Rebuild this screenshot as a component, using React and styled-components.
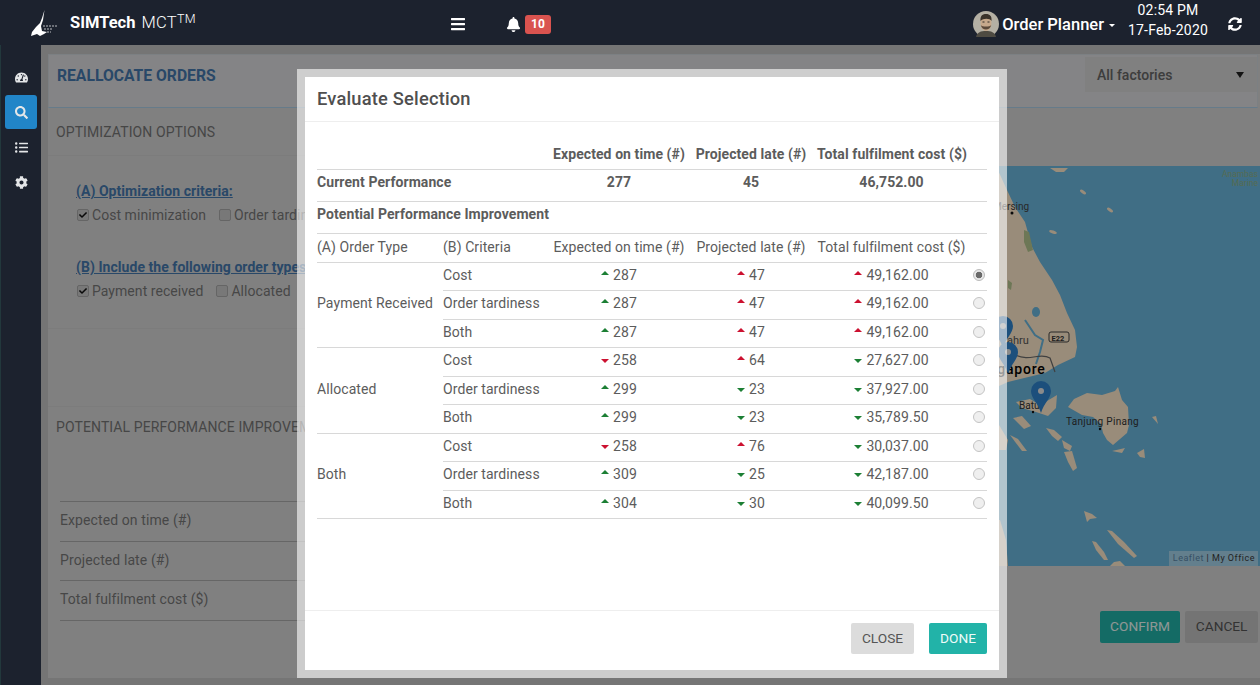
import React from 'react'
import styled, { createGlobalStyle } from 'styled-components'
import { FaTachometerAlt, FaSearch, FaListUl, FaCog, FaBars, FaBell, FaSyncAlt, FaCheck } from 'react-icons/fa'

const GlobalStyle = createGlobalStyle`
  html, body {
    margin: 0;
    padding: 0;
    height: 100%;
    overflow: hidden;
    font-family: Roboto, "Liberation Sans", sans-serif;
  }
  * {
    box-sizing: border-box;
  }
`
const colors = {
  navy: '#1c222e',
  blue: '#4578ad',
  pin: '#2f84cf',
  water: '#6bb7de',
  land: '#ffe9cb',
  text: '#5c5c5c',
  teal: '#22b3a8',
}

const Page = styled.div`
  display: flex;
  flex-direction: column;
  width: 1260px;
  height: 685px;
  overflow: hidden;
`
const Header = styled.header`
  display: flex;
  align-items: center;
  flex: 0 0 45px;
  background-color: ${colors.navy};
  color: white;
  position: relative;
  z-index: 3;
`
const Brand = styled.div`
  display: flex;
  align-items: center;
  width: 450px;
  padding-left: 30px;
  font-size: 16.5px;
`
const BrandName = styled.span`
  margin-left: 12px;
  font-weight: 700;
`
const BrandLight = styled.span`
  margin-left: 6px;
  font-weight: 300;
  letter-spacing: .3px;
  sup {
    font-size: 12.5px;
    line-height: 0;
    vertical-align: 5px;
  }
`
const HeaderIcon = styled.span`
  display: flex;
  margin-top: ${props => props.$drop || 0}px;
  font-size: ${props => props.size || 16}px;
`
const Notifications = styled.div`
  display: flex;
  align-items: center;
  gap: 4px;
  margin: 3px 0 0 40px;
`
const Badge = styled.span`
  padding: 3px 6px;
  border-radius: 3px;
  background-color: #d9534f;
  font-size: 12px;
  font-weight: 700;
  line-height: 13px;
`
const User = styled.div`
  display: flex;
  align-items: center;
  margin: 3px 0 0 auto;
  font-size: 16.5px;
  font-weight: 500;
`
const UserCaret = styled.span`
  width: 0;
  height: 0;
  margin: 3px 0 0 5px;
  border: 3px solid transparent;
  border-top-color: white;
  border-bottom: 0;
`
const Clock = styled.div`
  display: flex;
  flex-direction: column;
  align-items: center;
  gap: 4px;
  width: 92px;
  margin: -6px 0 0 7px;
  font-size: 14px;
  line-height: 16px;
  letter-spacing: .2px;
`
const Refresh = styled.span`
  display: flex;
  margin: 2px 18px 0 14px;
  font-size: 14px;
`
const Body = styled.div`
  display: flex;
  flex: 1;
  min-height: 0;
`
const Sidebar = styled.nav`
  display: flex;
  flex-direction: column;
  align-items: center;
  gap: 1px;
  flex: 0 0 41px;
  padding-top: 15px;
  background-color: ${colors.navy};
  border-left: 1px solid #22383c;
  position: relative;
  z-index: 3;
`
const SideItem = styled.a`
  display: flex;
  align-items: center;
  justify-content: center;
  width: 32px;
  height: 34px;
  border-radius: 3px;
  color: #e4e6e8;
  background-color: ${props => props.$active ? '#2185c8' : 'transparent'};
  svg {
    font-size: 13px;
  }
`
const Main = styled.main`
  flex: 1;
  padding: 9px 0 7px 7px;
  background-color: #c4c4c4;
  position: relative;
`
const Panel = styled.div`
  display: flex;
  flex-direction: column;
  height: 100%;
  background-color: #d6d6d6;
`
const TitleCard = styled.div`
  display: flex;
  align-items: flex-start;
  justify-content: space-between;
  flex: 0 0 54px;
  margin-right: 2px;
  padding: 2px 0 0 8px;
  background-color: #dcdddf;
  border: 1px solid #cfd6da;
  border-bottom-color: #aacde6;
`
const PageTitle = styled.h1`
  margin: 10px 0 0;
  font-size: 15.7px;
  line-height: 18px;
  font-weight: 700;
  color: ${colors.blue};
`
const Dropdown = styled.div`
  display: flex;
  align-items: center;
  justify-content: space-between;
  width: 172px;
  height: 35px;
  padding: 0 13px 0 12px;
  background-color: #d5d5d5;
  font-size: 14px;
  font-weight: 500;
  color: #666;
`
const DropdownArrow = styled.span`
  width: 0;
  height: 0;
  border: 4px solid transparent;
  border-top: 6px solid #222;
  border-bottom: 0;
`
const Columns = styled.div`
  display: flex;
  flex: 1;
  min-height: 0;
`
const LeftColumn = styled.section`
  flex: 0 0 512px;
  display: flex;
  flex-direction: column;
`
const SectionHead = styled.h2`
  display: flex;
  align-items: center;
  height: ${props => props.$height}px;
  margin: 0;
  padding-left: 8px;
  font-size: 14px;
  font-weight: 400;
  letter-spacing: .1px;
  color: #757575;
`
const OptionsBlock = styled.div`
  height: 174px;
  padding: 25px 0 0 28px;
  border-top: 1px solid #cfcfcf;
  border-bottom: 1px solid #cfcfcf;
`
const EmptyBlock = styled.div`
  height: 78px;
  border-bottom: 1px solid #cfcfcf;
`
const OptionTitle = styled.div`
  font-size: 14px;
  line-height: 20px;
  font-weight: 700;
  letter-spacing: .05px;
  color: ${colors.blue};
  text-decoration: underline;
`
const OptionRow = styled.div`
  display: flex;
  align-items: center;
  height: 22px;
  margin: 3px 0 31px;
  padding-left: 1px;
`
const Option = styled.label`
  display: flex;
  align-items: center;
  gap: 3px;
  margin-right: 13px;
  font-size: 14px;
  letter-spacing: .05px;
  color: #777;
`
const CheckBox = styled.span`
  display: flex;
  align-items: center;
  justify-content: center;
  width: 12px;
  height: 12px;
  border: 1px solid #a8a8a8;
  border-radius: 2px;
  background-color: #c8c8c8;
  font-size: 8px;
  color: #111;
`
const Metrics = styled.div`
  margin: 54px 0 0 12px;
  border-bottom: 1px solid #aaa;
`
const MetricRow = styled.div`
  display: flex;
  align-items: center;
  height: 39.5px;
  padding-bottom: 2px;
  border-top: 1px solid #aaa;
  font-size: 14px;
  letter-spacing: .1px;
  color: #777;
`
const RightColumn = styled.section`
  flex: 1;
  display: flex;
  flex-direction: column;
  padding-top: 58px;
`
const MapBox = styled.div`
  height: 400px;
  position: relative;
  overflow: hidden;
  background-color: ${colors.water};
  svg {
    display: block;
  }
`
const Attribution = styled.div`
  position: absolute;
  right: 2px;
  bottom: 0;
  padding: 1px 3px 1px 4px;
  background-color: rgba(255, 255, 255, .4);
  font-size: 9px;
  line-height: 13px;
  letter-spacing: .5px;
  color: #3a3a3a;
  span {
    color: #5c86a8;
  }
`
const PageActions = styled.div`
  display: flex;
  justify-content: flex-end;
  gap: 5px;
  margin: 45px 2px 0 0;
`
const buttonFills = {
  primary: colors.teal,
  muted: '#c2c2c2',
  plain: '#dcdcdc',
}
const Button = styled.button`
  height: ${props => props.$height || 32}px;
  padding: 0 ${props => props.$pad || 10.5}px 2px;
  border: 0;
  border-radius: 2px;
  background-color: ${props => buttonFills[props.$kind || 'plain']};
  color: ${props => props.$kind === 'primary' ? '#eefbf9' : '#555'};
  font-family: Roboto, "Liberation Sans", sans-serif;
  font-size: 13.7px;
`
const Backdrop = styled.div`
  position: absolute;
  inset: 0;
  background-color: rgba(0, 0, 0, .4);
`
const Modal = styled.div`
  position: fixed;
  top: 69px;
  left: 297px;
  display: flex;
  flex-direction: column;
  width: 710px;
  height: 609px;
  border: 8px solid rgba(255, 255, 255, .6);
  background-color: white;
  background-clip: padding-box;
  color: ${colors.text};
  z-index: 2;
`
const ModalHeader = styled.div`
  display: flex;
  align-items: center;
  flex: 0 0 45px;
  padding: 0 12px 2px;
  border-bottom: 1px solid #eee;
  font-size: 18.3px;
  font-weight: 500;
  letter-spacing: .2px;
  color: #4f4f4f;
`
const ModalBody = styled.div`
  flex: 1;
  padding: 17px 12px 0;
`
const ModalFooter = styled.div`
  display: flex;
  justify-content: flex-end;
  align-items: flex-start;
  gap: 15px;
  flex: 0 0 60px;
  padding: 12px 12px 0;
  border-top: 1px solid #eee;
`
const Table = styled.table`
  width: 100%;
  border-collapse: collapse;
  table-layout: fixed;
  font-size: 14px;
  letter-spacing: .08px;
`
const Cell = styled.td`
  height: ${props => props.$height || 28.5}px;
  padding: 0 0 ${props => props.$lift || 0}px;
  text-align: ${props => props.$center ? 'center' : 'left'};
  font-weight: ${props => props.$bold ? 700 : 400};
  border-top: ${props => props.$noLine ? '0' : '1px solid #d8d8d8'};
  white-space: nowrap;
`
const Trend = styled.span`
  display: inline-block;
  width: 0;
  height: 0;
  margin: 0 4px 3px 0;
  border-left: 4.5px solid transparent;
  border-right: 4.5px solid transparent;
  border-bottom: ${props => props.$dir === 'up' ? `4px solid ${props.$good ? '#1c7f34' : '#cc1130'}` : '0'};
  border-top: ${props => props.$dir === 'down' ? `4px solid ${props.$good ? '#1c7f34' : '#cc1130'}` : '0'};
  vertical-align: ${props => props.$dir === 'up' ? 2 : -1}px;
`
const Radio = styled.input`
  appearance: none;
  display: block;
  width: 12px;
  height: 12px;
  margin: 0 0 3px 7px;
  border: 1px solid #c4c4c4;
  border-radius: 50%;
  background-color: #efefef;
  &:checked {
    background: radial-gradient(circle, #6a6a6a 0 3px, #e8e8e8 3.6px);
    border-color: #bbb;
  }
`

const results = [
  { type: 'Payment Received', rows: [
    ['Cost', ['up', true, '287'], ['up', false, '47'], ['up', false, '49,162.00']],
    ['Order tardiness', ['up', true, '287'], ['up', false, '47'], ['up', false, '49,162.00']],
    ['Both', ['up', true, '287'], ['up', false, '47'], ['up', false, '49,162.00']],
  ] },
  { type: 'Allocated', rows: [
    ['Cost', ['down', false, '258'], ['up', false, '64'], ['down', true, '27,627.00']],
    ['Order tardiness', ['up', true, '299'], ['down', true, '23'], ['down', true, '37,927.00']],
    ['Both', ['up', true, '299'], ['down', true, '23'], ['down', true, '35,789.50']],
  ] },
  { type: 'Both', rows: [
    ['Cost', ['down', false, '258'], ['up', false, '76'], ['down', true, '30,037.00']],
    ['Order tardiness', ['up', true, '309'], ['down', true, '25'], ['down', true, '42,187.00']],
    ['Both', ['up', true, '304'], ['down', true, '30'], ['down', true, '40,099.50']],
  ] },
]

const Logo = () => (
  <svg width="28" height="26" viewBox="0 0 28 26">
    <path d="M14.5 0 L12 8 L10 13 L6 17 L2 22 L1 26 L7 24 L10 26 L14 24 L17 22 L12 21 L11 16 L13 10 Z" fill="white" />
    <path d="M13 16 H27 M14 19 H23 M17 22 H21" stroke="white" strokeWidth="1" strokeDasharray="2 1" opacity=".7" />
  </svg>
)

const Avatar = () => (
  <svg width="26" height="26" viewBox="0 0 26 26" style={{ marginRight: 3 }}>
    <circle cx="13" cy="13" r="13" fill="#b4b0a4" />
    <path d="M3 26 C4 21 8 20 13 20 C18 20 22 21 23 26 Z" fill="#4e4b42" />
    <ellipse cx="13" cy="12" rx="5.5" ry="8" fill="#c6a98c" />
    <path d="M7.5 10 C7 4 10 3 13 3 C17 3 19 5 18.5 10 C17 7 10 7 7.5 10 Z" fill="#3a332b" />
    <path d="M7.8 14 C9 20 17 20 18.2 14 C17 16 9 16 7.8 14 Z" fill="#5b4a3b" />
    <path d="M9.5 11 H11.5 M14.5 11 H16.5" stroke="#2f2a24" strokeWidth="1" />
  </svg>
)

const Pin = ({ x, y }) => (
  <g transform={`translate(${x} ${y})`}>
    <path d="M0 32 C-3 22 -10 17 -10 10 A10 10 0 0 1 10 10 C10 17 3 22 0 32 Z" fill={colors.pin} />
    <circle cx="0" cy="10" r="3" fill="#e8e8e8" />
  </g>
)

// viewBox follows page coordinates, easier to trace the coast
const SeaMap = () => (
  <svg width="700" height="400" viewBox="560 166 700 400">
    <g fill={colors.land}>
      <path d="M560 166 H996 L1007 190 L1015 207 L1025 222 L1032 247 L1040 262 L1052 280 L1060 295 L1067 313 L1075 330 L1077 347 L1075 357 L1058 365 L1045 373 L1008 382 L990 390 H560 Z" />
      <path d="M560 420 H996 L1008 440 L1006 450 H560 Z" />
      <path d="M560 520 H1000 L1006 540 L1008 566 H560 Z" />
      <path d="M1068 407 L1074 399 L1087 393 L1102 395 L1115 391 L1118 387 L1122 400 L1128 407 L1129 425 L1127 433 L1113 445 L1107 440 L1103 433 L1101 424 L1093 417 L1082 415 Z" />
      <path d="M1016 402 L1030 399 L1040 405 L1052 398 L1057 395 L1056 408 L1048 416 L1036 412 L1022 408 Z" />
      <path d="M1013 418 L1022 416 L1031 426 L1024 429 Z" />
      <path d="M1046 428 L1054 430 L1062 437 L1058 441 L1052 436 Z" />
      <path d="M1062 440 L1072 446 L1070 451 L1064 448 Z" />
      <path d="M1064 452 L1072 451 L1077 468 L1073 471 L1068 462 Z" />
      <path d="M1010 435 L1018 439 L1027 451 L1022 451 Z" />
      <path d="M1084 511 L1092 514 L1097 518 L1090 519 L1087 522 Z" />
      <path d="M1107 530 L1112 531 L1124 542 L1137 556 L1134 558 L1118 544 Z" />
      <path d="M1092 541 L1096 542 L1104 552 L1108 560 L1104 560 L1096 550 Z" />
      <path d="M1110 566 L1114 562 L1120 561 L1125 566 Z" />
      <path d="M1112 451 L1125 448 L1122 453 Z" />
      <path d="M1137 453 L1144 449 L1145 458 L1140 457 Z" />
      <path d="M1152 417 L1156 416 L1158 424 Z" />
      <path d="M1050 168 L1068 168 L1064 172 L1056 172 Z" />
      <ellipse cx="1083" cy="192" rx="3.5" ry="1.5" transform="rotate(35 1083 192)" />
      <ellipse cx="1110" cy="210" rx="3.5" ry="1.5" transform="rotate(35 1110 210)" />
      <ellipse cx="1053" cy="232" rx="4" ry="1.5" transform="rotate(20 1053 232)" />
    </g>
    <path d="M1024 230 L1029 232 L1033 250 L1028 252 L1024 242 Z" fill="#b6c78f" />
    <path d="M1008 280 L1012 283 L1011 290 L1008 288 Z" fill="#b6c78f" />
    <ellipse cx="1036" cy="312" rx="4" ry="5" fill={colors.water} />
    <path d="M1025 320 L1035 335 L1043 340 L1040 352 L1036 364" stroke={colors.water} strokeWidth="2" fill="none" />
    <path d="M1015 355 C1030 362 1040 352 1050 358 L1055 372" stroke="#6b6b6b" strokeWidth="1.2" fill="none" />
    <text x="993" y="210" fontSize="10" fill="#444" fontFamily="Roboto, sans-serif">Mersing</text>
    <circle cx="1012" cy="213" r="1.5" fill="#111" />
    <text x="1007" y="344" fontSize="11" fill="#555" fontFamily="Roboto, sans-serif">ahru</text>
    <rect x="1049" y="332" width="20" height="10" rx="2" fill={colors.land} stroke="#444" />
    <text x="1051.5" y="340.5" fontSize="7.5" fontWeight="700" fill="#333" fontFamily="Roboto, sans-serif">E22</text>
    <text x="975" y="374" fontSize="14" letterSpacing=".8" fontWeight="500" fill="#000" fontFamily="Roboto, sans-serif">Singapore</text>
    <text x="1019" y="409" fontSize="10" fill="#333" fontFamily="Roboto, sans-serif">Batu</text>
    <circle cx="1033" cy="412" r="1.2" fill="#111" />
    <text x="1066" y="425" fontSize="10" letterSpacing=".3" fill="#333" fontFamily="Roboto, sans-serif">Tanjung Pinang</text>
    <circle cx="1100" cy="429" r="1.2" fill="#111" />
    <text x="1258" y="177" fontSize="8.5" textAnchor="end" fill="#8fb48a" fontFamily="Roboto, sans-serif">Anambas</text>
    <text x="1258" y="186" fontSize="8.5" textAnchor="end" fill="#8fb48a" fontFamily="Roboto, sans-serif">Marine</text>
    <Pin x={1003} y={316} />
    <Pin x={1008} y={342} />
    <Pin x={1041} y={381} />
  </svg>
)

const TrendCell = ({ dir, good, value }) => (
  <Cell $center $lift={3}>
    <Trend $dir={dir} $good={good} />{value}
  </Cell>
)

const App = () => (
  <Page>
    <GlobalStyle />
    <Header>
      <Brand>
        <Logo />
        <BrandName>SIMTech</BrandName>
        <BrandLight>MCT<sup>TM</sup></BrandLight>
      </Brand>
      <HeaderIcon size={16} $drop={2}><FaBars /></HeaderIcon>
      <Notifications>
        <HeaderIcon size={15}><FaBell /></HeaderIcon>
        <Badge>10</Badge>
      </Notifications>
      <User>
        <Avatar />
        Order Planner
        <UserCaret />
      </User>
      <Clock>
        <span>02:54 PM</span>
        <span>17-Feb-2020</span>
      </Clock>
      <Refresh><FaSyncAlt /></Refresh>
    </Header>
    <Body>
      <Sidebar>
        <SideItem><FaTachometerAlt /></SideItem>
        <SideItem $active><FaSearch /></SideItem>
        <SideItem><FaListUl /></SideItem>
        <SideItem><FaCog /></SideItem>
      </Sidebar>
      <Main>
        <Panel>
          <TitleCard>
            <PageTitle>REALLOCATE ORDERS</PageTitle>
            <Dropdown>All factories<DropdownArrow /></Dropdown>
          </TitleCard>
          <Columns>
            <LeftColumn>
              <SectionHead $height={47}>OPTIMIZATION OPTIONS</SectionHead>
              <OptionsBlock>
                <OptionTitle>(A) Optimization criteria:</OptionTitle>
                <OptionRow>
                  <Option><CheckBox><FaCheck /></CheckBox>Cost minimization</Option>
                  <Option><CheckBox />Order tardiness</Option>
                </OptionRow>
                <OptionTitle>(B) Include the following order types:</OptionTitle>
                <OptionRow>
                  <Option><CheckBox><FaCheck /></CheckBox>Payment received</Option>
                  <Option><CheckBox />Allocated</Option>
                </OptionRow>
              </OptionsBlock>
              <EmptyBlock />
              <SectionHead $height={40}>POTENTIAL PERFORMANCE IMPROVEMENT</SectionHead>
              <Metrics>
                <MetricRow>Expected on time (#)</MetricRow>
                <MetricRow>Projected late (#)</MetricRow>
                <MetricRow>Total fulfilment cost ($)</MetricRow>
              </Metrics>
            </LeftColumn>
            <RightColumn>
              <MapBox>
                <SeaMap />
                <Attribution><span>Leaflet</span> | My Office</Attribution>
              </MapBox>
              <PageActions>
                <Button $kind="primary">CONFIRM</Button>
                <Button $kind="muted">CANCEL</Button>
              </PageActions>
            </RightColumn>
          </Columns>
        </Panel>
        <Backdrop />
      </Main>
      <Modal>
        <ModalHeader>Evaluate Selection</ModalHeader>
        <ModalBody>
          <Table>
            <colgroup>
              <col style={{ width: 126 }} />
              <col style={{ width: 110 }} />
              <col style={{ width: 132 }} />
              <col style={{ width: 132 }} />
              <col style={{ width: 149 }} />
              <col style={{ width: 21 }} />
            </colgroup>
            <tbody>
              <tr>
                <Cell colSpan={2} $noLine $height={30} />
                <Cell $center $bold $noLine $height={30}>Expected on time (#)</Cell>
                <Cell $center $bold $noLine $height={30}>Projected late (#)</Cell>
                <Cell $center $bold $noLine $height={30}>Total fulfilment cost ($)</Cell>
                <Cell $noLine $height={30} />
              </tr>
              <tr>
                <Cell colSpan={2} $bold $height={32} $lift={6}>Current Performance</Cell>
                <Cell $center $bold $height={32} $lift={6}>277</Cell>
                <Cell $center $bold $height={32} $lift={6}>45</Cell>
                <Cell $center $bold $height={32} $lift={6}>46,752.00</Cell>
                <Cell $height={32} />
              </tr>
              <tr>
                <Cell colSpan={6} $bold $height={32} $lift={6}>Potential Performance Improvement</Cell>
              </tr>
              <tr>
                <Cell $height={29} $lift={2}>(A) Order Type</Cell>
                <Cell $height={29} $lift={2}>(B) Criteria</Cell>
                <Cell $center $height={29} $lift={2}>Expected on time (#)</Cell>
                <Cell $center $height={29} $lift={2}>Projected late (#)</Cell>
                <Cell $center $height={29} $lift={2}>Total fulfilment cost ($)</Cell>
                <Cell $height={29} />
              </tr>
              {results.map((group, g) => group.rows.map((row, r) => (
                <tr key={`${g}-${r}`}>
                  {r === 0 && <Cell rowSpan={3} $lift={3}>{group.type}</Cell>}
                  <Cell $lift={3}>{row[0]}</Cell>
                  {row.slice(1).map((m, i) => (
                    <TrendCell key={i} dir={m[0]} good={m[1]} value={m[2]} />
                  ))}
                  <Cell><Radio type="radio" name="evaluate" defaultChecked={g === 0 && r === 0} /></Cell>
                </tr>
              )))}
              <tr>
                <Cell colSpan={6} $height={1} />
              </tr>
            </tbody>
          </Table>
        </ModalBody>
        <ModalFooter>
          <Button $height={31} $pad={11}>CLOSE</Button>
          <Button $kind="primary" $height={31} $pad={11}>DONE</Button>
        </ModalFooter>
      </Modal>
    </Body>
  </Page>
)

export default App
